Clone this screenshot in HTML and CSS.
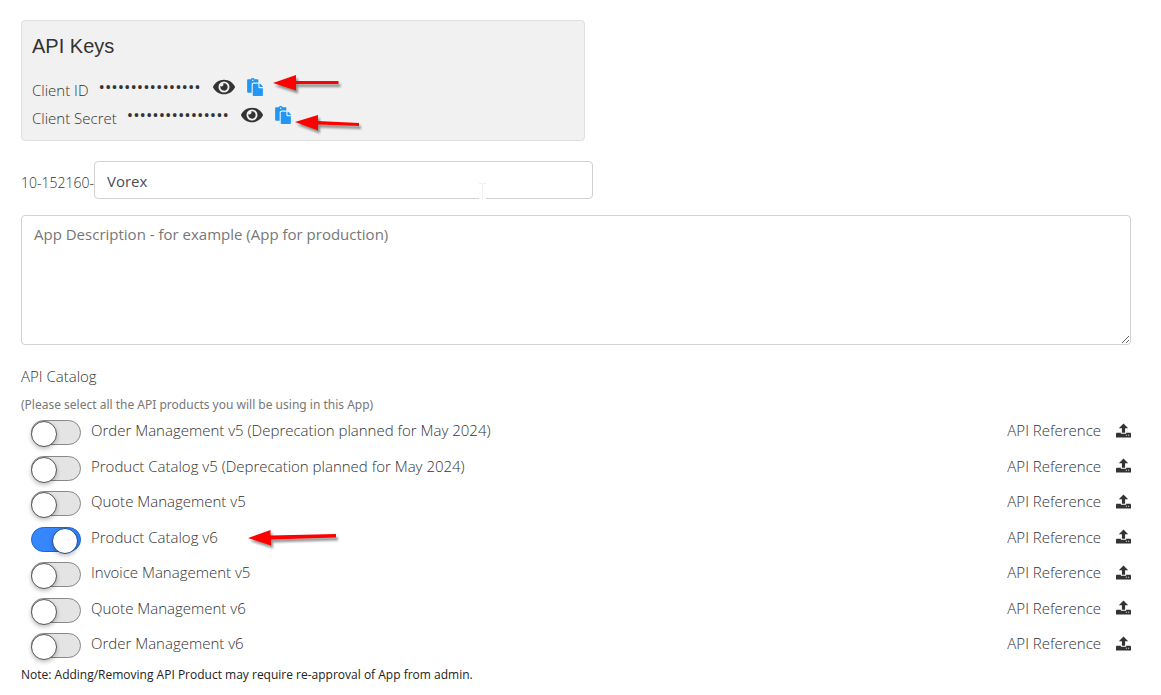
FILE: index.html
```html
<!DOCTYPE html>
<html lang="en">
<head>
<meta charset="utf-8">
<meta name="viewport" content="width=device-width, initial-scale=1">
<title>API Keys</title>
<link rel="stylesheet" href="styles.css">
</head>
<body>
<svg class="defs" aria-hidden="true">
  <symbol id="eye" viewBox="0 0 576 512"><path d="M572.52 241.4C518.29 135.59 410.93 64 288 64S57.68 135.64 3.48 241.41a32.35 32.35 0 0 0 0 29.19C57.71 376.41 165.07 448 288 448s230.32-71.64 284.52-177.41a32.35 32.35 0 0 0 0-29.19zM288 400a144 144 0 1 1 144-144 143.93 143.93 0 0 1-144 144zm0-240a95.31 95.31 0 0 0-25.31 3.79 47.85 47.85 0 0 1-66.9 66.9A95.78 95.78 0 1 0 288 160z"/></symbol>
  <symbol id="paste" viewBox="0 0 448 512"><path d="M128 184c0-30.879 25.122-56 56-56h136V56c0-13.255-10.745-24-24-24h-80.61C204.306 12.89 183.637 0 160 0s-44.306 12.89-55.39 32H24C10.745 32 0 42.745 0 56v336c0 13.255 10.745 24 24 24h104V184zm32-144c13.255 0 24 10.745 24 24s-10.745 24-24 24-24-10.745-24-24 10.745-24 24-24zm184 248h104v200c0 13.255-10.745 24-24 24H184c-13.255 0-24-10.745-24-24V184c0-13.255 10.745-24 24-24h136v104c0 13.2 10.8 24 24 24zm104-38.059V256h-96v-96h6.059a24 24 0 0 1 16.97 7.029l65.941 65.941a24.002 24.002 0 0 1 7.03 16.971z"/></symbol>
  <symbol id="upload" viewBox="0 0 16 15"><path fill-rule="evenodd" d="M8 0l5 5H9.700v5H6.300V5H3zM0.500 10h4.700v1h5.600v-1h4.700l.5 1v4H0v-4zM10.500 12v1h1v-1zM13 12v1h1v-1z"/></symbol>
</svg>
<main class="page">
  <section class="keys">
    <h1 class="keys-title">API Keys</h1>
    <div class="key-row">
      <span class="key-label">Client ID</span>
      <span class="key-mask">••••••••••••••••</span>
      <button class="icon-button" type="button" aria-label="Show Client ID"><svg class="eye"><use href="#eye"/></svg></button>
      <button class="icon-button copy" type="button" aria-label="Copy Client ID"><svg class="paste"><use href="#paste"/></svg></button>
    </div>
    <div class="key-row">
      <span class="key-label">Client Secret</span>
      <span class="key-mask">••••••••••••••••</span>
      <button class="icon-button" type="button" aria-label="Show Client Secret"><svg class="eye"><use href="#eye"/></svg></button>
      <button class="icon-button copy" type="button" aria-label="Copy Client Secret"><svg class="paste"><use href="#paste"/></svg></button>
    </div>
  </section>

  <div class="name-row">
    <label class="name-prefix" for="app-name">10-152160-</label>
    <input class="field name-field" id="app-name" type="text" value="Vorex">
  </div>
  <textarea class="field description" aria-label="App Description" placeholder="App Description - for example (App for production)"></textarea>

  <section>
    <h2 class="catalog-title">API Catalog</h2>
    <p class="hint">(Please select all the API products you will be using in this App)</p>
    <ul class="catalog">
      <li class="product"><input class="switch" type="checkbox" id="p1"><label for="p1">Order Management v5 (Deprecation planned for May 2024)</label><a class="reference" href="#">API Reference<svg class="upload" aria-hidden="true"><use href="#upload"/></svg></a></li>
      <li class="product"><input class="switch" type="checkbox" id="p2"><label for="p2">Product Catalog v5 (Deprecation planned for May 2024)</label><a class="reference" href="#">API Reference<svg class="upload" aria-hidden="true"><use href="#upload"/></svg></a></li>
      <li class="product"><input class="switch" type="checkbox" id="p3"><label for="p3">Quote Management v5</label><a class="reference" href="#">API Reference<svg class="upload" aria-hidden="true"><use href="#upload"/></svg></a></li>
      <li class="product"><input class="switch" type="checkbox" id="p4" checked><label for="p4">Product Catalog v6</label><a class="reference" href="#">API Reference<svg class="upload" aria-hidden="true"><use href="#upload"/></svg></a></li>
      <li class="product"><input class="switch" type="checkbox" id="p5"><label for="p5">Invoice Management v5</label><a class="reference" href="#">API Reference<svg class="upload" aria-hidden="true"><use href="#upload"/></svg></a></li>
      <li class="product"><input class="switch" type="checkbox" id="p6"><label for="p6">Quote Management v6</label><a class="reference" href="#">API Reference<svg class="upload" aria-hidden="true"><use href="#upload"/></svg></a></li>
      <li class="product"><input class="switch" type="checkbox" id="p7"><label for="p7">Order Management v6</label><a class="reference" href="#">API Reference<svg class="upload" aria-hidden="true"><use href="#upload"/></svg></a></li>
    </ul>
    <p class="note">Note: Adding/Removing API Product may require re-approval of App from admin.</p>
  </section>

  <svg class="arrow arrow-id" viewBox="0 0 72 22" aria-hidden="true"><path d="M0 8L23 0V6H65.500V9H23V15.500z"/></svg>
  <svg class="arrow arrow-secret" viewBox="0 0 72 22" aria-hidden="true"><path d="M0 7L23 0V6L64 8V11L23 9.500V15.500z"/></svg>
  <svg class="arrow arrow-product" viewBox="0 0 96 22" aria-hidden="true"><path d="M0 8L22.500 0V5.500L88 4V7.500L23 9.500V15.500z"/></svg>
  <svg class="caret" viewBox="0 0 7 17" aria-hidden="true"><path d="M0 15h7v2H0z" fill="#fff"/><path d="M0 .5h3M4 .5h3M3.500 1v16" stroke="#f0f0f0" fill="none"/></svg>
</main>
</body>
</html>
```
FILE: styles.css
```css
*, *::before { box-sizing: border-box; }

body {
  margin: 0;
  background: #fff;
  color: #333;
  font: 300 15px/24px "Open Sans", "Noto Sans", sans-serif;
}

.defs { display: none; }

.page {
  position: relative;
  padding: 20px 30px 8px 21px;
}

.keys {
  max-width: 564px;
  padding: 11px 10px 8px;
  background: #f1f1f1;
  border: 1px solid #dfdfdf;
  border-radius: 4px;
}

.keys-title {
  margin: 0 0 16px;
  font: 400 20px/28px "Liberation Sans", Arial, sans-serif;
}

.key-row {
  display: flex;
  align-items: center;
  height: 28px;
}

.key-label { margin-right: 10px; }

.key-mask {
  margin-right: 12px;
  padding-bottom: 6px;
  font: 400 17px/18px "Open Sans", sans-serif;
}

.icon-button {
  display: flex;
  margin: 0 12px 6px 0;
  padding: 0;
  border: 0;
  background: none;
  color: #333;
}

.copy { color: #2196f3; }

.icon-button svg, .upload { fill: currentColor; }
.eye { width: 22px; height: 20px; }
.paste { width: 16px; height: 18px; }

.name-row {
  display: flex;
  align-items: center;
  margin: 20px 0 16px;
  max-width: 572px;
}

.name-prefix {
  padding-top: 6px;
  font-size: 14px;
}

.field {
  border: 1px solid #d2d2d2;
  border-radius: 4px;
  background: #fff;
  color: #495057;
  font: 400 15px/24px "Open Sans", "Noto Sans", sans-serif;
}

.name-field {
  flex: 1;
  min-width: 0;
  height: 38px;
  padding: 7px 12px 5px;
}

.description {
  display: block;
  width: 100%;
  height: 130px;
  padding: 6px 12px;
  resize: vertical;
}

.description::placeholder { color: #777; }

.catalog-title {
  margin: 19px 0 7px;
  font-size: 15px;
  font-weight: 300;
  line-height: 24px;
}

.hint {
  margin: 0;
  color: #777;
  font: 400 12px/20px "Noto Sans", "Open Sans", sans-serif;
}

.catalog {
  display: grid;
  grid-auto-rows: 1fr;
  min-height: 249px;
  margin: 0;
  padding: 0 0 0 10px;
  list-style: none;
}

.product {
  display: flex;
  align-items: flex-start;
  gap: 10px;
  padding-top: 3px;
}

.switch {
  appearance: none;
  flex: none;
  width: 50px;
  height: 25px;
  margin: 2px 0 0;
  border: 1px solid #888;
  border-radius: 13px;
  background: #e4e4e4;
}

.switch::before {
  content: "";
  display: block;
  width: 26px;
  height: 26px;
  margin-left: -1px;
  border: 1px solid #555;
  border-radius: 50%;
  background: #fff;
  box-shadow: 0 2px 4px rgba(0, 0, 0, .25);
}

.switch:checked {
  border-color: #1768cf;
  background: #3686ff;
}

.switch:checked::before {
  margin-left: 20px;
  border-color: #174b91;
}

.reference {
  display: flex;
  align-items: center;
  gap: 15px;
  margin-left: auto;
  color: #333;
  text-decoration: none;
}

.reference .upload { width: 15px; height: 15px; }

.note {
  margin: 1px 0 0;
  color: #222;
  font-size: 12px;
  font-weight: 500;
  line-height: 20px;
}

.arrow {
  position: absolute;
  height: 22px;
  fill: #f00;
  filter: drop-shadow(2px 3px 1px rgba(0, 0, 0, .4));
}

.arrow-id { left: 273px; top: 75px; width: 72px; }
.arrow-secret { left: 295px; top: 115px; width: 72px; }
.arrow-product { left: 248px; top: 530px; width: 96px; }
.caret { position: absolute; left: 479px; top: 183px; width: 7px; height: 17px; }
```
